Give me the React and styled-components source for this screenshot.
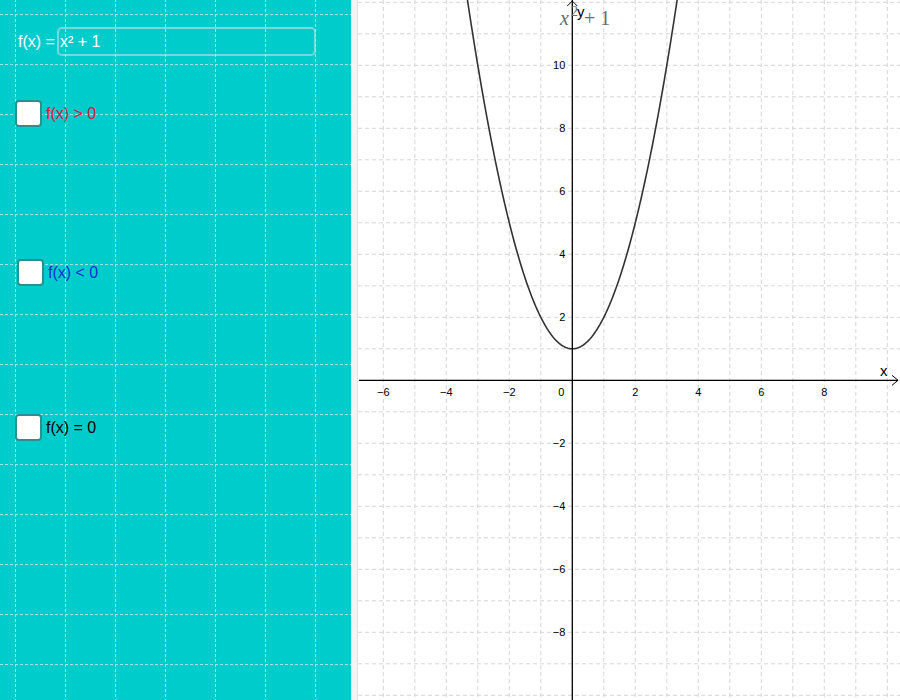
import React from 'react'
import styled, { createGlobalStyle } from 'styled-components'

const GlobalStyle = createGlobalStyle`
html, body {
    margin: 0;
    padding: 0;
    overflow: hidden;
    background: #ffffff;
    font-family: "Liberation Sans", Arial, sans-serif;
}
`

const gridTile = "url(\"data:image/svg+xml;utf8,<svg xmlns='http://www.w3.org/2000/svg' width='50' height='50'><path d='M0.5 0V50M0 0.5H50' stroke='%2399e3e3' stroke-dasharray='3 2' fill='none'/></svg>\")"

const Page = styled.div`
display: flex;
width: 900px;
height: 700px;
`

const ControlPanel = styled.div`
display: flex;
flex-direction: column;
width: 351px;
height: 700px;
flex-shrink: 0;
background-color: #00cccc;
background-image: ${gridTile};
background-position: 15px 14px;
`

const Divider = styled.div`
width: 6px;
background: #f4f4f4;
border-right: 1px solid #e2e2e2;
flex-shrink: 0;
`

const GraphArea = styled.div`
flex: 1;
height: 700px;
background: #ffffff;
`

const FormulaRow = styled.div`
display: flex;
align-items: center;
margin-top: 27px;
padding-left: 18px;
color: #f2ffff;
font-size: 16px;
`

const FormulaInput = styled.div`
display: flex;
align-items: center;
box-sizing: border-box;
width: 259px;
height: 29px;
margin-left: 2px;
padding-left: 1px;
border: 2px solid rgba(215, 225, 225, 0.55);
border-radius: 5px;
color: #ffffff;
font-size: 16px;
`

const CheckRow = styled.label`
display: flex;
align-items: center;
margin-top: ${p => p.$gap}px;
padding-left: ${p => p.$indent}px;
font-size: 16px;
color: ${p => p.$color};
cursor: pointer;
`

const Box = styled.span`
box-sizing: border-box;
width: 27px;
height: 27px;
background: #ffffff;
border: 2px solid #2a8f8f;
border-radius: 4px;
margin-right: 4px;
`

const ox = 214.3
const oy = 380.3
const unit = 31.5
const X = u => ox + u * unit
const Y = v => oy - v * unit

const fmt = n => (n < 0 ? '\u2212' + Math.abs(n) : String(n))

const Graph = () => {
    const vLines = []
    for (let u = -6; u <= 10; u++) vLines.push(u)
    const hLines = []
    for (let v = -10; v <= 12; v++) hLines.push(v)

    let d = ''
    for (let i = 0; i <= 200; i++) {
        const u = -3.45 + (6.9 * i) / 200
        const v = u * u + 1
        d += (i === 0 ? 'M' : 'L') + X(u).toFixed(2) + ' ' + Y(v).toFixed(2)
    }

    return (
        <svg width="542" height="700" viewBox="0 0 542 700" style={{ display: 'block' }}>
            <g stroke="#d6d6d6" strokeWidth="1" strokeDasharray="4 3">
                {vLines.map(u => (
                    <line key={'v' + u} x1={X(u)} y1="0" x2={X(u)} y2="700" />
                ))}
                {hLines.map(v => (
                    <line key={'h' + v} x1="0" y1={Y(v)} x2="542" y2={Y(v)} />
                ))}
            </g>
            <path d={d} fill="none" stroke="#333333" strokeWidth="1.6" />
            <g stroke="#000" strokeWidth="1.3" fill="none">
                <line x1="1" y1={oy} x2="540" y2={oy} />
                <line x1={ox} y1="0" x2={ox} y2="700" />
                <polyline points={`${ox - 5},6 ${ox},1 ${ox + 5},6`} strokeWidth="1" />
                <polyline points={`534,${oy - 5} 540,${oy} 534,${oy + 5}`} strokeWidth="1" />
            </g>
            <g fontFamily="'Liberation Sans', Arial, sans-serif" fontSize="11" fill="#000">
                {[-6, -4, -2, 2, 4, 6, 8].map(u => (
                    <text key={'xl' + u} x={X(u)} y={oy + 16} textAnchor="middle">{fmt(u)}</text>
                ))}
                <text x={X(0) - 11} y={oy + 16} textAnchor="middle">0</text>
                {[10, 8, 6, 4, 2, -2, -4, -6, -8].map(v => (
                    <text key={'yl' + v} x={ox - 7} y={Y(v) + 4} textAnchor="end">{fmt(v)}</text>
                ))}
            </g>
            <g fontFamily="'Liberation Serif', 'Times New Roman', serif" fill="#6a6a6a">
                <text x="202" y="25" fontSize="20" fontStyle="italic">x</text>
                <text x="213" y="16" fontSize="14">2</text>
                <text x="226" y="25" fontSize="20">+ 1</text>
            </g>
            <g fontFamily="'Liberation Sans', Arial, sans-serif" fontSize="15" fill="#000">
                <text x="219" y="17">y</text>
                <text x="522" y="376">x</text>
            </g>
        </svg>
    )
}

const App = () => {
    return (
        <>
            <GlobalStyle />
            <Page>
                <ControlPanel>
                    <FormulaRow>
                        f(x) =
                        <FormulaInput>x² + 1</FormulaInput>
                    </FormulaRow>
                    <CheckRow $gap={44} $indent={15} $color="#e0163e">
                        <Box />f(x) &gt; 0
                    </CheckRow>
                    <CheckRow $gap={132} $indent={17} $color="#1330d6">
                        <Box />f(x) &lt; 0
                    </CheckRow>
                    <CheckRow $gap={128} $indent={15} $color="#000000">
                        <Box />f(x) = 0
                    </CheckRow>
                </ControlPanel>
                <Divider />
                <GraphArea>
                    <Graph />
                </GraphArea>
            </Page>
        </>
    )
}

export default App
